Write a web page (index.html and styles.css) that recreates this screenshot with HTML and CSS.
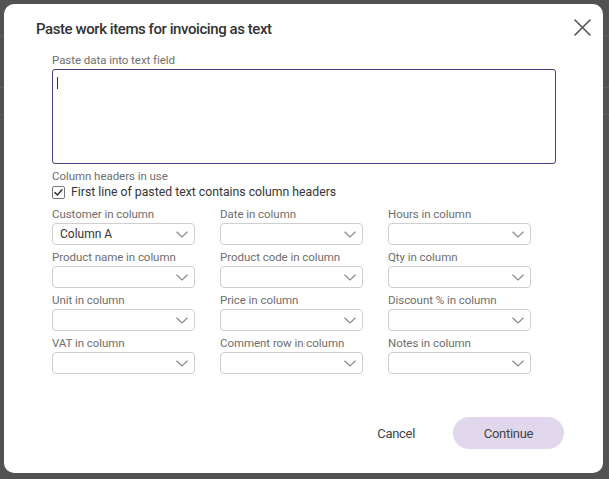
FILE: index.html
```html
<!DOCTYPE html>
<html lang="en">
<head>
<meta charset="utf-8">
<title>Paste work items for invoicing as text</title>
<link rel="stylesheet" href="styles.css">
</head>
<body>
<div class="backdrop">
  <div class="dialog" role="dialog" aria-labelledby="dlg-title">
    <div class="dialog-header">
      <h2 class="dialog-title" id="dlg-title">Paste work items for invoicing as text</h2>
      <button class="close-btn" aria-label="Close">
        <svg width="17" height="17" viewBox="0 0 17 17"><path d="M1 1 L16 16 M16 1 L1 16" stroke="#555" stroke-width="1.6" fill="none" stroke-linecap="round"/></svg>
      </button>
    </div>
    <div class="dialog-body">
      <div class="field-label">Paste data into text field</div>
      <div class="paste-box" role="textbox" aria-multiline="true"><span class="caret"></span></div>
      <div class="field-label section-label">Column headers in use</div>
      <label class="check-row">
        <span class="checkbox"><svg width="11" height="11" viewBox="0 0 11 11"><path d="M2 5.6 L4.4 8 L9 2.8" stroke="#333" stroke-width="1.5" fill="none" stroke-linecap="round" stroke-linejoin="round"/></svg></span>
        <span>First line of pasted text contains column headers</span>
      </label>
      <div class="mapping-grid">
        <div class="field"><div class="field-label">Customer in column</div><div class="select"><span class="select-value">Column A</span><svg class="chev" width="12" height="7" viewBox="0 0 12 7"><path d="M0.5 0.8 L6 6 L11.5 0.8" stroke="#8a8a8a" stroke-width="1.2" fill="none"/></svg></div></div>
        <div class="field"><div class="field-label">Date in column</div><div class="select"><span class="select-value"></span><svg class="chev" width="12" height="7" viewBox="0 0 12 7"><path d="M0.5 0.8 L6 6 L11.5 0.8" stroke="#8a8a8a" stroke-width="1.2" fill="none"/></svg></div></div>
        <div class="field"><div class="field-label">Hours in column</div><div class="select"><span class="select-value"></span><svg class="chev" width="12" height="7" viewBox="0 0 12 7"><path d="M0.5 0.8 L6 6 L11.5 0.8" stroke="#8a8a8a" stroke-width="1.2" fill="none"/></svg></div></div>
        <div class="field"><div class="field-label">Product name in column</div><div class="select"><span class="select-value"></span><svg class="chev" width="12" height="7" viewBox="0 0 12 7"><path d="M0.5 0.8 L6 6 L11.5 0.8" stroke="#8a8a8a" stroke-width="1.2" fill="none"/></svg></div></div>
        <div class="field"><div class="field-label">Product code in column</div><div class="select"><span class="select-value"></span><svg class="chev" width="12" height="7" viewBox="0 0 12 7"><path d="M0.5 0.8 L6 6 L11.5 0.8" stroke="#8a8a8a" stroke-width="1.2" fill="none"/></svg></div></div>
        <div class="field"><div class="field-label">Qty in column</div><div class="select"><span class="select-value"></span><svg class="chev" width="12" height="7" viewBox="0 0 12 7"><path d="M0.5 0.8 L6 6 L11.5 0.8" stroke="#8a8a8a" stroke-width="1.2" fill="none"/></svg></div></div>
        <div class="field"><div class="field-label">Unit in column</div><div class="select"><span class="select-value"></span><svg class="chev" width="12" height="7" viewBox="0 0 12 7"><path d="M0.5 0.8 L6 6 L11.5 0.8" stroke="#8a8a8a" stroke-width="1.2" fill="none"/></svg></div></div>
        <div class="field"><div class="field-label">Price in column</div><div class="select"><span class="select-value"></span><svg class="chev" width="12" height="7" viewBox="0 0 12 7"><path d="M0.5 0.8 L6 6 L11.5 0.8" stroke="#8a8a8a" stroke-width="1.2" fill="none"/></svg></div></div>
        <div class="field"><div class="field-label">Discount % in column</div><div class="select"><span class="select-value"></span><svg class="chev" width="12" height="7" viewBox="0 0 12 7"><path d="M0.5 0.8 L6 6 L11.5 0.8" stroke="#8a8a8a" stroke-width="1.2" fill="none"/></svg></div></div>
        <div class="field"><div class="field-label">VAT in column</div><div class="select"><span class="select-value"></span><svg class="chev" width="12" height="7" viewBox="0 0 12 7"><path d="M0.5 0.8 L6 6 L11.5 0.8" stroke="#8a8a8a" stroke-width="1.2" fill="none"/></svg></div></div>
        <div class="field"><div class="field-label">Comment row in column</div><div class="select"><span class="select-value"></span><svg class="chev" width="12" height="7" viewBox="0 0 12 7"><path d="M0.5 0.8 L6 6 L11.5 0.8" stroke="#8a8a8a" stroke-width="1.2" fill="none"/></svg></div></div>
        <div class="field"><div class="field-label">Notes in column</div><div class="select"><span class="select-value"></span><svg class="chev" width="12" height="7" viewBox="0 0 12 7"><path d="M0.5 0.8 L6 6 L11.5 0.8" stroke="#8a8a8a" stroke-width="1.2" fill="none"/></svg></div></div>
      </div>
    </div>
    <div class="dialog-footer">
      <button class="btn-text">Cancel</button>
      <button class="btn-primary">Continue</button>
    </div>
  </div>
</div>
</body>
</html>
```
FILE: styles.css
```css
html, body {
  margin: 0;
  padding: 0;
}
body {
  font-family: Roboto, "Liberation Sans", sans-serif;
  background-color: #525252;
  background-image:
    linear-gradient(to bottom, transparent 35px, #5e5e5e 35px, #5e5e5e 36px, transparent 36px),
    linear-gradient(to bottom, transparent 87px, #5e5e5e 87px, #5e5e5e 88px, transparent 88px),
    linear-gradient(to bottom, transparent 114px, #5e5e5e 114px, #5e5e5e 115px, transparent 115px);
  min-height: 479px;
}
.backdrop {
  padding: 4px;
}
.dialog {
  width: 599px;
  box-sizing: border-box;
  background: #fff;
  border-radius: 10px;
  padding: 15px 0 24px;
}
.dialog-header {
  display: flex;
  justify-content: space-between;
  align-items: flex-start;
  padding: 0 12px 0 32px;
  height: 20px;
}
.dialog-title {
  margin: 0;
  font-size: 15px;
  font-weight: 500;
  line-height: 20px;
  letter-spacing: -0.43px;
  color: #333;
}
.close-btn {
  width: 17px;
  height: 17px;
  padding: 0;
  margin: 0;
  border: 0;
  background: none;
}
.close-btn svg {
  display: block;
}
.dialog-body {
  padding: 14px 47px 0 48px;
}
.field-label {
  font-size: 11.5px;
  line-height: 15px;
  color: #6e6e6e;
  letter-spacing: -0.05px;
  white-space: nowrap;
}
.paste-box {
  margin-top: 1px;
  height: 95px;
  box-sizing: border-box;
  border: 1px solid #4a3f80;
  border-radius: 3px;
  padding: 7px 4px;
  background: #fff;
}
.caret {
  display: block;
  width: 1px;
  height: 12px;
  background: #333;
}
.section-label {
  margin-top: 5px;
}
.check-row {
  display: flex;
  align-items: center;
  gap: 6px;
  font-size: 12.25px;
  line-height: 17px;
  color: #363636;
}
.checkbox {
  width: 13px;
  height: 13px;
  box-sizing: border-box;
  border: 1px solid #777;
  border-radius: 2px;
  display: flex;
  align-items: center;
  justify-content: center;
  background: #fff;
}
.checkbox svg {
  display: block;
}
.mapping-grid {
  margin-top: 6px;
  display: grid;
  grid-template-columns: repeat(3, 143px);
  column-gap: 25px;
  row-gap: 5px;
}
.select {
  margin-top: 1px;
  height: 22px;
  box-sizing: border-box;
  border: 1px solid #cfcfcf;
  border-radius: 4px;
  display: flex;
  align-items: center;
  justify-content: space-between;
  padding: 0 6px 0 7px;
  background: #fff;
}
.select-value {
  font-size: 12px;
  color: #333;
}
.chev {
  display: block;
}
.dialog-footer {
  margin-top: 43px;
  display: flex;
  justify-content: flex-end;
  align-items: center;
  gap: 22px;
  padding-right: 39px;
}
.btn-text, .btn-primary {
  font-family: Roboto, "Liberation Sans", sans-serif;
  font-size: 13px;
  letter-spacing: -0.3px;
  color: #444;
  border: 0;
  height: 32px;
  margin: 0;
}
.btn-text {
  background: none;
  padding: 0 16px;
}
.btn-primary {
  width: 111px;
  border-radius: 16px;
  background: #e1d7ec;
  padding: 0;
}
```
